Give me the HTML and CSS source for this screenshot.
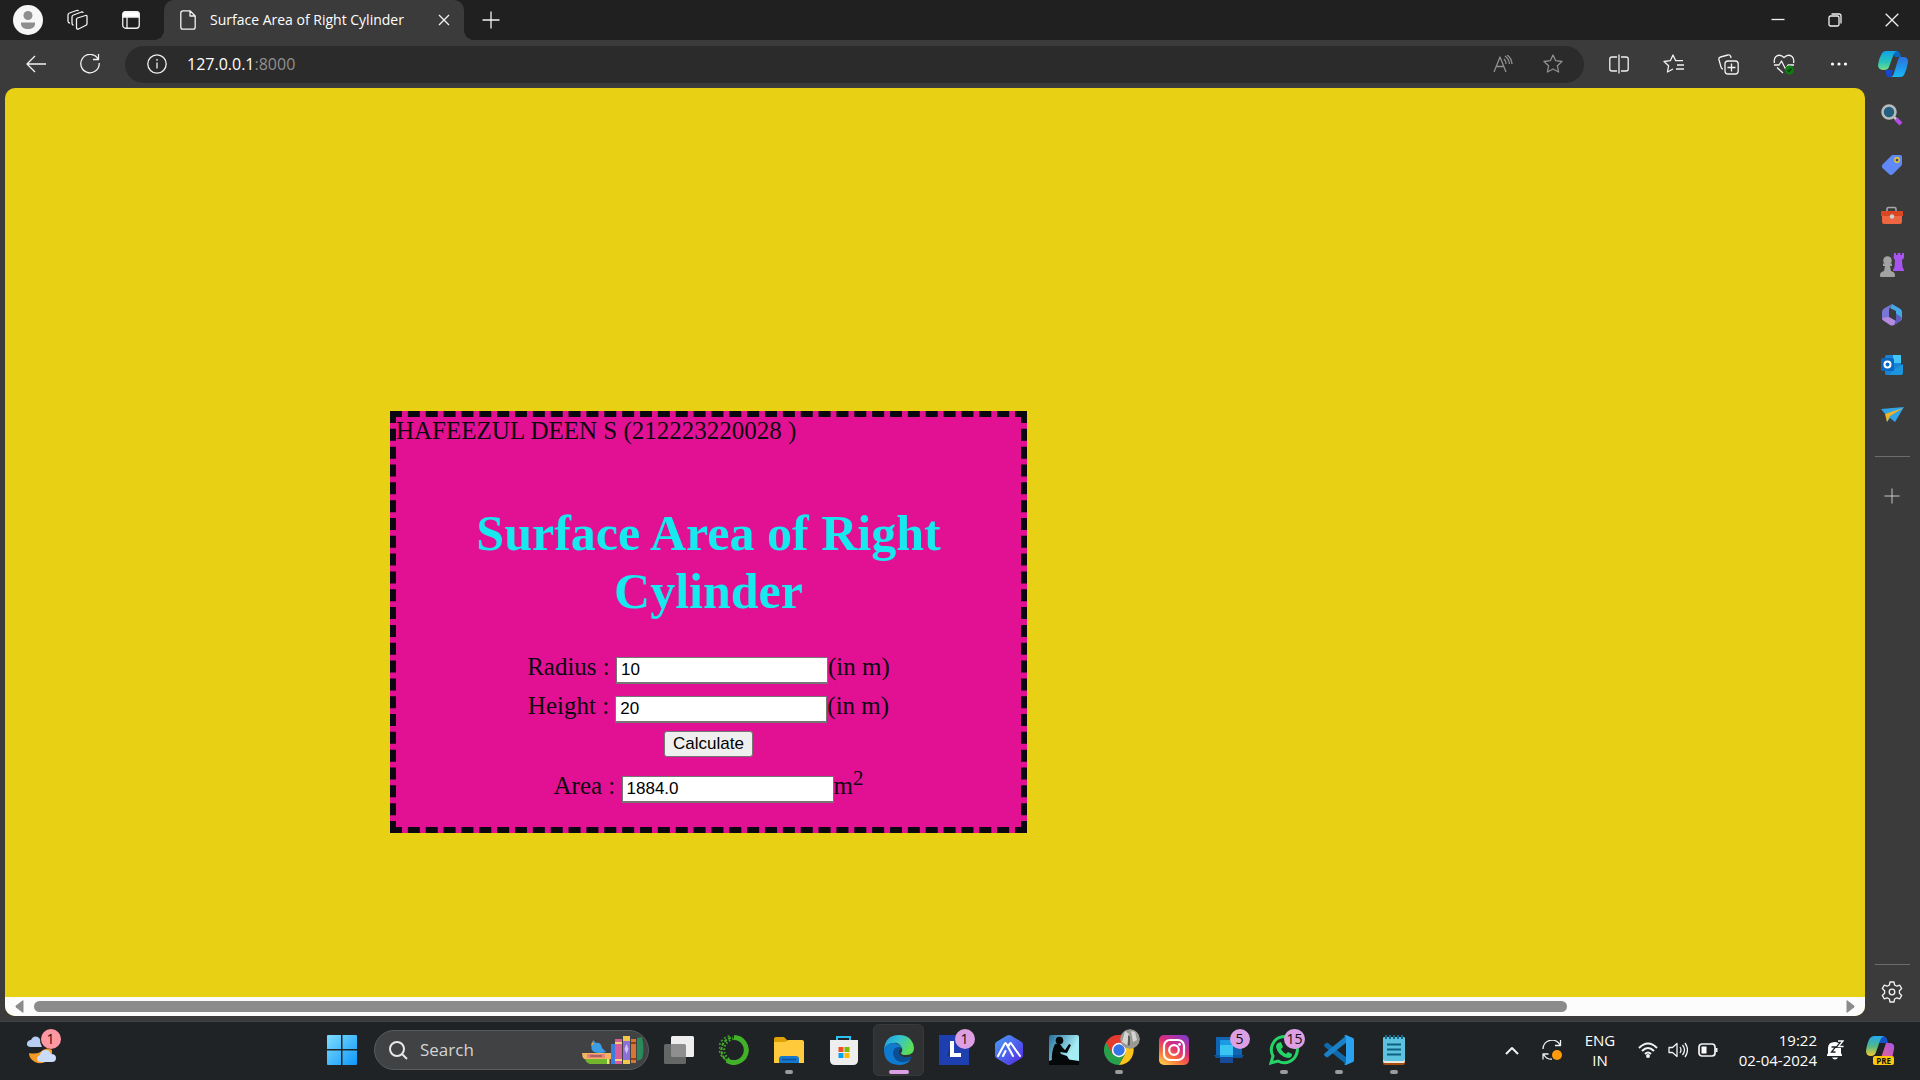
FILE: index.html
```html
<!DOCTYPE html>
<html lang="en">
<head>
<meta charset="utf-8">
<title>Surface Area of Right Cylinder</title>
<link rel="stylesheet" href="styles.css">
</head>
<body>
<header class="titlebar">
  <button class="cell cell-profile" aria-label="Profile"><svg width="30" height="30" viewBox="0 0 30 30"><circle cx="15" cy="15" r="15" fill="#f7f7f7"/><circle cx="15" cy="10.500" r="4.500" fill="#8e8e8e"/><path d="M8 17.500h14v1.500c0 3-3 5-7 5s-7-2-7-5z" fill="#8e8e8e"/></svg></button>
  <button class="cell cell-spaces" aria-label="Workspaces"><svg class="line" width="22" height="22" viewBox="0 0 22 22"><path d="M10.500 9l8-2.500q1.500-.5 1.500 1v7q0 1.500-1.500 2l-7 3.500q-2 .5-2-1.500v-8q0-1.200 1-1.500z"/><path d="M6.500 16q-1.500 0-1.500-2V8q0-1.500 1.500-2l8-3q1.500-.3 1.500 1"/><path d="M3 14q-2 0-2-2V6q0-1.500 1.500-2l7-2.500q1.500-.5 2 .5"/></svg></button>
  <button class="cell cell-tabs" aria-label="Tab actions"><svg class="line" width="18" height="18" viewBox="0 0 18 18"><rect x=".75" y=".75" width="16.500" height="16.500" rx="3"/><path d="M1 3q0-2 2-2h12q2 0 2 2v3H1z" fill="#fff"/><path d="M5 6v11"/></svg></button>
  <div class="tab">
    <svg class="line" width="16" height="20" viewBox="0 0 16 20"><path d="M3 .8h7l5.200 5.200v11q0 2.200-2.200 2.200H3Q.8 19.200.8 17V3Q.8.8 3 .8zM10 1v5h5"/></svg>
    <span class="tab-title">Surface Area of Right Cylinder</span>
    <button class="tab-close" aria-label="Close tab"><svg class="line" width="12" height="12" viewBox="0 0 12 12"><path d="M1 1l10 10M11 1L1 11"/></svg></button>
  </div>
  <button class="cell cell-new" aria-label="New tab"><svg class="line" width="18" height="18" viewBox="0 0 18 18"><path d="M9 .5v17M.5 9h17"/></svg></button>
  <div class="window-buttons">
    <button class="cell" aria-label="Minimize"><svg class="line" width="14" height="14" viewBox="0 0 14 14"><path d="M.5 6.500h13"/></svg></button>
    <button class="cell" aria-label="Restore"><svg class="line" width="14" height="14" viewBox="0 0 14 14"><rect x="1" y="3" width="10" height="10" rx="1.500"/><path d="M3.500 1H11q2 0 2 2v7.500"/></svg></button>
    <button class="cell" aria-label="Close"><svg class="line" width="14" height="14" viewBox="0 0 14 14"><path d="M.7.7l12.600 12.600M13.300.7L.7 13.300"/></svg></button>
  </div>
</header>
<nav class="toolbar" aria-label="Browser toolbar">
  <div class="nav-buttons">
    <button class="cell" aria-label="Back"><svg class="line" width="20" height="18" viewBox="0 0 20 18"><path d="M20 9H1M9 1L1 9l8 8"/></svg></button>
    <button class="cell" aria-label="Refresh"><svg class="line" width="20" height="20" viewBox="0 0 20 20"><path d="M18 5A9.200 9.200 0 1 0 19.200 9M18.500 0v5.500H13"/></svg></button>
  </div>
  <div class="address">
    <svg class="line" width="20" height="20" viewBox="0 0 20 20"><circle cx="10" cy="10" r="9.200"/><path d="M10 8.500v6M10 5v1.800"/></svg>
    <span class="url">127.0.0.1<span class="port">:8000</span></span>
    <button class="cell dim" aria-label="Read aloud"><svg class="line" width="20" height="18" viewBox="0 0 20 18"><path d="M1 17L7 2l6 15M3 11.500h8M11 4q2 2 2 5M12 1q4 3 4.500 8M14 0q4.500 3 5 9"/></svg></button>
    <button class="cell dim" aria-label="Add to favorites"><svg class="line" width="20" height="20" viewBox="0 0 20 20"><path d="M10 1l2.700 5.700 6.300.8-4.600 4.300L15.600 18 10 15l-5.600 3 1.200-6.200L1 7.500l6.300-.8z"/></svg></button>
  </div>
  <div class="nav-buttons">
    <button class="cell" aria-label="Split screen"><svg class="line" width="20" height="20" viewBox="0 0 20 20"><path d="M8 3H3Q.8 3 .8 5v10q0 2 2.200 2h5M12 3h5q2.200 0 2.200 2v10q0 2-2.200 2h-5M10 .5v19"/></svg></button>
    <button class="cell" aria-label="Favorites"><svg class="line" width="21" height="20" viewBox="0 0 21 20"><path d="M10 15l-5.600 3 1.200-6.200L1 7.500l6.300-.8L10 1l2.700 5.700H20M14 11h7M13 15h8"/></svg></button>
    <button class="cell" aria-label="Collections"><svg class="line" width="21" height="21" viewBox="0 0 21 21"><rect x="7" y="7" width="13.200" height="13" rx="3"/><path d="M13.500 9.500v8M9.500 13.500h8M5 15Q3.500 15 3 13L.9 5.500Q.5 3.500 2.500 3l7.500-2q2-.6 2.700 1.500L13 4"/></svg></button>
    <button class="cell" aria-label="Browser essentials"><svg class="line" width="22" height="21" viewBox="0 0 22 21"><path d="M1.500 9Q.5 5 3 2.500 7-.5 11 3.500q4-4 8-1Q21.500 5 20.500 9M1 11h5l2.500-4 4 8 2.500-4h6M4 13.500l6 5.500"/><circle cx="16.500" cy="16" r="4.500" fill="#107c10" stroke="none"/><path d="M14.500 16l1.500 1.500 2.500-3" stroke="#073f07"/></svg></button>
    <button class="cell" aria-label="Settings and more"><svg width="18" height="4" viewBox="0 0 18 4" fill="#fff"><circle cx="2.500" cy="2" r="1.600"/><circle cx="9" cy="2" r="1.600"/><circle cx="15.500" cy="2" r="1.600"/></svg></button>
    <button class="cell" aria-label="Copilot"><svg width="30" height="28" viewBox="0 0 30 28"><defs><linearGradient id="ca" x1="0" y1="0" x2="0" y2="1"><stop offset="0" stop-color="#12a2e8"/><stop offset=".6" stop-color="#2ac4b6"/><stop offset="1" stop-color="#76df8b"/></linearGradient><linearGradient id="cb" x1="0" y1="0" x2="0" y2="1"><stop offset="0" stop-color="#2d6fdf"/><stop offset="1" stop-color="#16b8f7"/></linearGradient></defs><path d="M14 1h5q3 0 4 6h-6z" fill="#086ac0"/><path d="M7 20h8l-2 7q-4 1-5-3z" fill="#1746d0"/><path d="M8 1h11q-3 1-4 5l-4 11q-1 3-5 3-6 0-6-5Q1 8 4 3q1.500-2 4-2z" fill="url(#ca)"/><path d="M22 7h4q4 0 4 5-1 7-4 13-1 2-4 2H12q3 0 4-4l4-13q1-3 2-3z" fill="url(#cb)"/></svg></button>
  </div>
</nav>
<div class="workspace">
  <main class="viewport">
    <div class="page">
      <section class="card">
        <div class="author">HAFEEZUL DEEN S (212223220028 )</div>
        <h1>Surface Area of Right Cylinder</h1>
        <form>
          <div class="row"><label for="radius">Radius :</label> <input id="radius" type="text" value="10">(in m)</div>
          <div class="row"><label for="height">Height :</label> <input id="height" type="text" value="20">(in m)</div>
          <div class="row action"><button type="button" class="calculate">Calculate</button></div>
          <div class="row"><label for="area">Area :</label> <input id="area" type="text" value="1884.0">m<sup>2</sup></div>
        </form>
      </section>
    </div>
    <div class="scrollbar">
      <svg width="9" height="13" viewBox="0 0 9 13"><path d="M8.500 1v11q0 1-1 .5L1 7.500q-1-1 0-2L7.500.5q1-.5 1 .5z" fill="#8b8b8b"/></svg>
      <div class="track"><div class="thumb"></div></div>
      <svg width="9" height="13" viewBox="0 0 9 13"><path d="M.5 1v11q0 1 1 .5L8 7.500q1-1 0-2L1.500.5q-1-.5-1 .5z" fill="#8b8b8b"/></svg>
    </div>
  </main>
  <aside class="sidebar" aria-label="Sidebar">
    <button class="side" aria-label="Search"><svg width="22" height="22" viewBox="0 0 22 22"><path d="M12 12l4 4" stroke="#c8c8c8" stroke-width="2.500"/><path d="M15 15l5 5" stroke="#b44ae8" stroke-width="4"/><circle cx="8" cy="8" r="6.500" fill="#245f80" stroke="#b9bcbe" stroke-width="2.500"/></svg></button>
    <button class="side" aria-label="Shopping"><svg width="22" height="22" viewBox="0 0 22 22"><path d="M12 1h7q2 0 2 2v7q0 1-1 2l-8 8q-2 2-4 0L1.500 14q-1.500-2 0-3.500L10 2q1-1 2-1z" fill="#6088f6"/><circle cx="16" cy="6" r="2.200" fill="#394b72" stroke="#f5ca2e" stroke-width="1.400"/></svg></button>
    <button class="side" aria-label="Tools"><svg width="24" height="18" viewBox="0 0 24 18"><path d="M7 5V3q0-1.500 1.500-1.500h6Q16 1.500 16 3v2" fill="none" stroke="#a3a8ab" stroke-width="1.600"/><path d="M2 10h20v6q0 2-2 2H4q-2 0-2-2z" fill="#ee6542"/><path d="M2 5h20q1 0 1 1v4H1V6q0-1 1-1z" fill="#d94622"/><circle cx="12" cy="10.500" r="2.200" fill="#cbd0d3"/></svg></button>
    <button class="side" aria-label="Games"><svg width="24" height="24" viewBox="0 0 24 24"><path d="M14 0h2v2h1.500V0h3v2H22V0h2v5l-2 2 .5 7 1.500 3v1H13v-1l1.500-3 .5-7-1.500-2z" fill="#a855f0"/><g fill="#a2a2a2"><circle cx="7.500" cy="7.500" r="4.300"/><path d="M3 10.500h9v2.500h-2l1 5q4 1 4 4v1q0 1-1 1H1q-1 0-1-1v-1q0-3 4-4l1-5H3z"/></g></svg></button>
    <button class="side" aria-label="Microsoft 365"><svg width="22" height="22" viewBox="0 0 22 22"><path d="M11 0l8.500 5q1.500 1 1.500 3v6l-6-4V7L9 4z" fill="#43a8e8"/><path d="M11 0L3 4.500Q1 5.500 1 8v7l3 2 4-2V6q0-2 3-6z" fill="#7877d6"/><path d="M1 14l7-1 7 4 6-4q0 3-2 4l-6 4q-2 1-4 0l-6-4q-2-1-2-3z" fill="#b58be0"/><path d="M15 10l6 4q-3 5-8 7l2-5z" fill="#5a5dbf"/></svg></button>
    <button class="side" aria-label="Outlook"><svg width="22" height="20" viewBox="0 0 22 20"><rect x="4" width="16" height="20" rx="1.500" fill="#1b83d5"/><path d="M12 0h8v8h-8z" fill="#43c5f5"/><path d="M14 14l8-5v9q0 2-2 2H8z" fill="#1d95dc"/><rect y="3" width="13" height="13" rx="1.500" fill="#0968bf"/><circle cx="6.500" cy="9.500" r="3" fill="none" stroke="#fff" stroke-width="2"/></svg></button>
    <button class="side" aria-label="Drop"><svg width="23" height="16" viewBox="0 0 23 16"><path d="M0 2L23 0 14 15 9 11l-3 4-1-7z" fill="#2fa4e8"/><path d="M22 1L4 7l2 8 3-6z" fill="#f2b324"/></svg></button>
    <hr>
    <button class="side" aria-label="Customize"><svg width="16" height="16" viewBox="0 0 16 16"><path d="M8 .5v15M.5 8h15" stroke="#c9c9c9" fill="none"/></svg></button>
    <hr class="push">
    <button class="side side-settings" aria-label="Settings"><svg class="line" width="22" height="22" viewBox="0 0 22 22"><circle cx="11" cy="11" r="2.800"/><path d="M9 1h4l.6 3 2.200 1.200 3-1 1.900 3.400-2.300 2.100v2.600l2.300 2.100-1.900 3.400-3-1-2.200 1.200-.6 3H9l-.6-3-2.200-1.200-3 1-1.900-3.400 2.300-2.100V9.700L1.300 7.600l1.900-3.400 3 1L8.400 4z"/></svg></button>
  </aside>
</div>
<footer class="taskbar">
  <div class="widgets"><button class="app" aria-label="Weather"><span class="glyph"><svg width="30" height="30" viewBox="0 0 30 30"><path d="M2 18q9 2 14-3 5-3 9 0 1 8-5 11-6 4-12 1-6-3-6-9z" fill="#f29a23"/><path d="M3 12q-4-1-3-4 1-3 4-3 2-5 7-3 3 2 2 5l2 5z" fill="#b7cdf2"/><path d="M14 27q-4 0-4-3t3-4q1-5 6-5 4 0 5 4 5 0 5 4t-4 4z" fill="#cbdcfa"/></svg><span class="badge alert">1</span></span></button></div>
  <div class="apps">
    <button class="app" aria-label="Start"><svg width="30" height="30" viewBox="0 0 30 30"><defs><linearGradient id="wi" x1="0" y1="0" x2="1" y2="1"><stop offset="0" stop-color="#7fdcff"/><stop offset="1" stop-color="#0d98f9"/></linearGradient></defs><path d="M0 1Q0 0 1 0h13v14H0zM15.500 0H29q1 0 1 1v13H15.500zM0 15.500h14V30H1q-1 0-1-1zM15.500 15.500H30V29q0 1-1 1H15.500z" fill="url(#wi)"/></svg></button>
    <label class="search">
      <svg width="19" height="19" viewBox="0 0 19 19" fill="none" stroke="#e8e8e8" stroke-width="2"><circle cx="8" cy="8" r="7"/><path d="M13 13l5 5"/></svg>
      <input type="text" placeholder="Search" aria-label="Search">
      <svg width="62" height="28" viewBox="0 0 62 28"><path d="M0 17h29v6H2q-2-2-2-6z" fill="#f3b45d"/><path d="M5 18h18v4H5z" fill="#e8837d"/><path d="M8 19h12v2H8z" fill="#a9655f"/><path d="M3 23h25v5H8q-4-1-5-5z" fill="#73b62e"/><path d="M25 23h2v5h-2z" fill="#f3e27a"/><path d="M11 4l3 3q5-1 6 5l4 4q-7 2-12 0-4-3-2-8z" fill="#3d9ee8"/><path d="M10 6l-1 4 3-2z" fill="#f2a33a"/><path d="M29 8h4v20h-4z" fill="#397de0"/><path d="M33 3h7v25h-7z" fill="#d55d9b"/><path d="M33 6h7v2h-7zM33 23h7v2h-7z" fill="#f5cf77"/><path d="M41 0h7v28h-7z" fill="#8e6fd6"/><path d="M41 0h7v5h-7zM41 24h7v4h-7z" fill="#f1c84e"/><path d="M44.500 8l2 5-2 5-2-5z" fill="#cfc1f4"/><path d="M49 3h5v24h-5z" fill="#d77538"/><path d="M49 6h5v2h-5zM49 22h5v2h-5z" fill="#8f3f1a"/><path d="M55 2l5-1q3 12 0 22l-5 2z" fill="#298a5a"/></svg>
    </label>
    <button class="app" aria-label="Task view"><svg width="30" height="28" viewBox="0 0 30 28"><rect x="7" width="23" height="21" rx="1.500" fill="#eee"/><rect y="8" width="22" height="20" rx="1.500" fill="#777" opacity=".8"/></svg></button>
    <button class="app" aria-label="Anaconda"><svg width="30" height="30" viewBox="0 0 30 30" fill="none" stroke="#43b02a"><path d="M15 2.500a12.500 12.500 0 1 1-7 23" stroke-width="5"/><path d="M9 26A12.500 12.500 0 0 1 14 2.500" stroke-width="2" stroke-dasharray="3 1.500"/><path d="M6 24A12.500 12.500 0 0 1 11 1" stroke-width="1.500" stroke-dasharray="2 2"/><path d="M10 24A11 11 0 0 1 15 4" stroke-width="2" stroke-dasharray="1.500 2"/></svg></button>
    <button class="app running" aria-label="File Explorer"><svg width="30" height="26" viewBox="0 0 30 26"><path d="M0 2q0-2 2-2h8l3 3v5H0z" fill="#e0a106"/><path d="M0 5h11l3-2h14q2 0 2 2v21H0z" fill="#ffcb3d"/><path d="M5 26v-4q0-3 3-3h14q3 0 3 3v4z" fill="#1478cd"/><path d="M8 22.500h14" stroke="#08509a" stroke-width="1.500"/></svg></button>
    <button class="app" aria-label="Microsoft Store"><svg width="30" height="30" viewBox="0 0 30 30"><path d="M8 6V2h13v4" fill="none" stroke="#2cc0f1" stroke-width="2"/><path d="M1 5h28v20q0 5-5 5H6q-5 0-5-5z" fill="#eee"/><path d="M9.500 12h5v5h-5z" fill="#f25022"/><path d="M15.500 12h5v5h-5z" fill="#7fba00"/><path d="M9.500 18h5v5h-5z" fill="#00a4ef"/><path d="M15.500 18h5v5h-5z" fill="#ffb900"/></svg></button>
    <button class="app active" aria-label="Microsoft Edge"><svg width="30" height="30" viewBox="0 0 30 30"><defs><linearGradient id="ed" x1="0" y1="0" x2="1" y2=".4"><stop offset="0" stop-color="#1e9be2"/><stop offset=".5" stop-color="#33c2cf"/><stop offset="1" stop-color="#5dde59"/></linearGradient></defs><path d="M0 15Q1 0 15 0q8 0 12 5 3 4 3 8 0 7-8 7-5 0-5-2 2-2 1-5-3-6-9-5-7 1-9 7z" fill="url(#ed)"/><path d="M0 15q2-7 9-7 6 0 9 5-6-2-8 3-1 5 3 9 5 4 14-1-4 6-12 6Q0 29 0 15z" fill="#0f7bd0"/><path d="M11 13q4-2 7 1-4 0-3 4 2 5 9 4 4-1 4 0-4 6-11 5-8-2-8-9 0-3 2-5z" fill="#0c4f94"/></svg></button>
    <button class="app" aria-label="L app"><span class="glyph"><svg width="30" height="30" viewBox="0 0 30 30"><path d="M0 0h30v30H0z" fill="#1e3fb0"/><path d="M8 22l4-15v12z" fill="#173182"/><path d="M11 6h4v12h7v4H11z" fill="#fff"/></svg><span class="badge">1</span></span></button>
    <button class="app" aria-label="Hexagon app"><svg width="28" height="30" viewBox="0 0 28 30"><defs><linearGradient id="hx" x1="0" y1="0" x2="1" y2="1"><stop offset="0" stop-color="#48a0f4"/><stop offset="1" stop-color="#5427e4"/></linearGradient></defs><path d="M12 .5q2-1 4 0l10 6q2 1 2 3v11q0 2-2 3l-10 6q-2 1-4 0l-10-6q-2-1-2-3v-11q0-2 2-3z" fill="url(#hx)"/><path d="M3 21L9.500 9q1-2 2 0L18 21M13 12l1.500-3q1-2 2 0L25 21M8 21l2.500-5" fill="none" stroke="#fff" stroke-width="2" stroke-linecap="round" stroke-linejoin="round"/></svg></button>
    <button class="app" aria-label="Kindle"><svg width="30" height="30" viewBox="0 0 30 30"><defs><linearGradient id="ki" x1="0" y1="0" x2="1" y2=".6"><stop offset="0" stop-color="#276e9d"/><stop offset=".8" stop-color="#a4edf4"/></linearGradient></defs><rect width="30" height="30" rx="2" fill="url(#ki)"/><g fill="#050809"><circle cx="10.500" cy="5.500" r="3.800"/><path d="M6 9q5-2 7 3l3 3 4-6 2 1-4 8-7-1 1 2 6 2 3 5H3q-1-9 3-17z"/><path d="M0 26q6-3 15-2t15 2v4H0z"/></g></svg></button>
    <button class="app running" aria-label="Chrome"><span class="glyph"><svg width="30" height="30" viewBox="0 0 30 30"><path d="M15 15L2 7.500A15 15 0 0 1 28 7.500z" fill="#e33b2e"/><path d="M15 15L2 7.500A15 15 0 0 0 15 30l6.500-11.500z" fill="#28a04b"/><path d="M15 30l6.500-11.500L22 8h6A15 15 0 0 1 15 30z" fill="#fcc31e"/><path d="M2 7.500L8.500 19l5-2L15 8h13A15 15 0 0 0 2 7.500z" fill="#e33b2e"/><circle cx="15" cy="15" r="7.200" fill="#fff"/><circle cx="15" cy="15" r="5.700" fill="#3476e8"/></svg><svg class="badge photo" width="20" height="20" viewBox="0 0 20 20"><circle cx="10" cy="10" r="10" fill="#9a9892"/><path d="M5 2l4 3-2 11-5-3zM11 2l4 1 2 8-4 2z" fill="#d4d5d3"/><path d="M8 6l2 2v8l-2 1z" fill="#5b5b58"/></svg></span></button>
    <button class="app" aria-label="Instagram"><svg width="30" height="30" viewBox="0 0 30 30"><defs><linearGradient id="ig" x1=".2" y1="1" x2=".8" y2="0"><stop offset="0" stop-color="#fdc748"/><stop offset=".3" stop-color="#f7693c"/><stop offset=".6" stop-color="#da2d7c"/><stop offset="1" stop-color="#8a3ac8"/></linearGradient></defs><rect width="30" height="30" rx="5" fill="url(#ig)"/><g fill="none" stroke="#fff" stroke-width="2.200"><rect x="5" y="5" width="20" height="20" rx="6"/><circle cx="15" cy="15" r="4.800"/></g><circle cx="20.500" cy="9.500" r="1.400" fill="#fff"/></svg></button>
    <button class="app" aria-label="Phone Link"><span class="glyph"><svg width="30" height="30" viewBox="0 0 30 30"><path d="M2 2h26v18H2z" fill="#1164b4"/><path d="M0 20h30l-2 3H2z" fill="#0d559d"/><rect x="6" y="5" width="13" height="23" rx="1" fill="#1c9be5"/><path d="M6 10h13v10H6z" fill="#39c4f2"/><path d="M6 22h13v6H6z" fill="#174a98"/></svg><span class="badge">5</span></span></button>
    <button class="app running" aria-label="WhatsApp"><span class="glyph"><svg width="30" height="30" viewBox="0 0 30 30"><path d="M2 28l2-7A13 13 0 1 1 9 26z" fill="none" stroke="#25d366" stroke-width="3"/><path d="M9 8l3-1 2 5-2 2q2 4 5 5l2-2 4 2q0 4-4 4-10-2-12-11 0-3 2-4z" fill="#25d366"/></svg><span class="badge">15</span></span></button>
    <button class="app running" aria-label="Visual Studio Code"><svg width="30" height="30" viewBox="0 0 30 30"><path d="M0 10l2-2q1-.5 2 0l19 15v7L1 12q-1-1-1-2z" fill="#0f69ad"/><path d="M0 20l2 2q1 .5 2 0L23 7V0L1 18q-1 1-1 2z" fill="#1a81c9"/><path d="M22 0l7 3q1 .5 1 2v20q0 1.500-1 2l-7 3q-1 0-2-1 2 0 2-2V3q0-2-2-2 1-1 2-1z" fill="#2ba2f0"/></svg></button>
    <button class="app running" aria-label="Notepad"><svg width="22" height="30" viewBox="0 0 22 30"><rect y="3" width="22" height="27" rx="2" fill="#a84f0e"/><rect y="2" width="22" height="26" rx="2" fill="#e9e7e2"/><rect y="2" width="22" height="24" rx="2" fill="#5dc2de"/><path d="M3 0v4M7 0v4M11 0v4M15 0v4M19 0v4" stroke="#14688a" stroke-width="2"/><path d="M4 9.500h14M4 14.500h14M4 19.500h14" stroke="#0d6180" stroke-width="2"/></svg></button>
  </div>
  <div class="tray">
    <button class="cell" aria-label="Hidden icons"><svg class="line thick" width="14" height="9" viewBox="0 0 14 9"><path d="M1 8l6-6 6 6"/></svg></button>
    <button class="cell" aria-label="Update"><svg class="line" width="20" height="20" viewBox="0 0 20 20"><path d="M1 9A9 9 0 0 1 18 5M18.500 0v5.500H13M10 19.200A9 9 0 0 1 2 15M1 19.500V14h5.500"/><circle cx="15" cy="15" r="5" fill="#ff9b0b" stroke="none"/></svg></button>
    <div class="language">ENG<br>IN</div>
    <button class="status" aria-label="Network, volume and battery">
      <svg class="line thick" width="20" height="16" viewBox="0 0 20 16"><path d="M1 6q9-9 18 0M4 9q6-6 12 0M7 12q3-3 6 0"/><circle cx="10" cy="14" r="1" fill="#fff"/></svg>
      <svg class="line" width="20" height="16" viewBox="0 0 20 16"><path d="M1 5.500h3.500L9 1.500v13l-4.500-4H1zM12 5q2 3 0 6M14.500 3q4 5 0 10M17 1q5 7 0 14"/></svg>
      <svg class="line" width="20" height="14" viewBox="0 0 20 14"><rect x="1" y="1" width="16" height="12" rx="3" stroke-width="1.700"/><path d="M18.500 5v4" stroke-width="2"/><rect x="3.500" y="3.500" width="5" height="7" fill="#fff" stroke="none"/></svg>
    </button>
    <div class="clock">19:22<br>02-04-2024</div>
    <button class="bell" aria-label="Notifications"><svg width="18" height="20" viewBox="0 0 18 20"><path d="M2 8q0-6 7-6 6 0 6 6v5l1 2v1H1v-1l1-2zM6 17.500h6q-1 2-3 2t-3-2z" fill="#fff"/><path d="M5.500 7h4l-4 5h4" fill="none" stroke="#202325" stroke-width="1.300"/><path d="M11.500 1h5l-4.500 5.500h5" fill="none" stroke="#202325" stroke-width="3"/><path d="M12 1h5l-4.500 5.500h5" fill="none" stroke="#fff" stroke-width="1.300"/></svg></button>
    <button class="cell preview" aria-label="Copilot preview"><svg width="29" height="28" viewBox="0 0 29 28"><defs><linearGradient id="pa" x1="0" y1="0" x2="0" y2="1"><stop offset="0" stop-color="#25a9ed"/><stop offset=".5" stop-color="#4fb78a"/><stop offset="1" stop-color="#f5cb2e"/></linearGradient><linearGradient id="pb" x1="1" y1="0" x2="0" y2="1"><stop offset="0" stop-color="#a956e8"/><stop offset="1" stop-color="#f1667c"/></linearGradient></defs><path d="M12 0h5q4 0 5 7h-8z" fill="#1552c7"/><path d="M8 0h10q-3 1-4 5l-4 11q-1 4-5 4-5 0-5-5Q1 7 4 2q2-2 4-2z" fill="url(#pa)"/><path d="M20 7h4q5 0 4 6-1 6-3 12H12q3-2 4-6z" fill="url(#pb)"/></svg><span class="pre">PRE</span></button>
  </div>
</footer>
</body>
</html>
```
FILE: styles.css
```css
* { box-sizing: border-box; }

body {
  margin: 0;
  min-height: 100vh;
  display: flex;
  flex-direction: column;
  background: #3b3b3b;
  color: #fff;
  font-family: "Open Sans", "Noto Sans", sans-serif;
}

svg { display: block; flex: none; }

.line { fill: none; stroke: #f2f2f2; stroke-width: 1.3; stroke-linejoin: round; }
.thick { stroke-width: 2; }

.cell, .side, .app, .tab-close, .status, .bell {
  display: flex;
  align-items: center;
  justify-content: center;
  flex: none;
  padding: 0;
  border: 0;
  background: none;
  color: inherit;
  font: inherit;
}

/* Title bar and tab */
.titlebar { display: flex; height: 40px; background: #202020; }
.cell-profile { width: 56px; }
.cell-spaces { width: 44px; }
.cell-tabs { width: 62px; }
.cell-new { width: 54px; }

.tab {
  position: relative;
  display: flex;
  align-items: center;
  width: 300px;
  margin-left: 2px;
  padding: 0 14px 0 16px;
  border-radius: 10px 10px 0 0;
  background: #3b3b3b;
}
.tab::before, .tab::after {
  content: "";
  position: absolute;
  bottom: 0;
  width: 10px;
  height: 10px;
}
.tab::before { right: 100%; background: radial-gradient(circle at 0 0, #202020 10px, #3b3b3b 10px); }
.tab::after { left: 100%; background: radial-gradient(circle at 100% 0, #202020 10px, #3b3b3b 10px); }
.tab-title { margin-left: 14px; flex: 1; font-size: 14px; line-height: 20px; white-space: nowrap; }
.window-buttons { display: flex; margin-left: auto; }
.window-buttons .cell { width: 57px; }

/* Toolbar */
.toolbar { display: flex; align-items: center; height: 48px; padding-left: 8px; }
.nav-buttons { display: flex; }
.nav-buttons .cell { width: 55px; }
.nav-buttons .cell:last-child { width: 54px; }
.address {
  flex: 1;
  display: flex;
  align-items: center;
  height: 37px;
  margin: 0 7px 0 8px;
  padding: 0 6px 0 22px;
  border-radius: 19px;
  background: #2b2b2b;
}
.url { flex: 1; margin-left: 20px; font-size: 16px; line-height: 22px; }
.port { color: #909090; }
.address .cell { width: 50px; }
.dim .line { stroke: #909090; }

/* Page area */
.workspace { flex: 1; display: flex; padding: 0 0 5px 5px; }
.viewport {
  flex: 1;
  display: flex;
  flex-direction: column;
  overflow: hidden;
  border-radius: 10px;
  background: #e8d014;
}
.page {
  flex: 1;
  padding: 323px 10px 10px 385px;
  color: #0c0810;
  font-family: "Liberation Serif", "Times New Roman", serif;
  font-size: 25px;
  line-height: 29px;
}
.card {
  width: 637px;
  padding-bottom: 21px;
  border: 6px dashed #0b0610;
  background: #e21194;
}
.author { line-height: 27px; }
.card h1 {
  margin: 60px 0 28px;
  color: #17e9ee;
  font-size: 50px;
  line-height: 58px;
  text-align: center;
}
.row { padding: 4px 0 3px; text-align: center; }
.action { padding: 0 0 5px; }
.row input, .calculate {
  font-family: "Liberation Sans", Arial, sans-serif;
  font-size: 17px;
  line-height: 20px;
  color: #000;
}
.row input {
  width: 212px;
  height: 27px;
  padding: 1px 4px;
  border: 1px solid #767676;
  border-bottom-width: 2px;
  border-radius: 0;
  background: #fff;
}
.calculate {
  width: 89px;
  height: 26px;
  padding: 0;
  border: 1px solid #767676;
  border-radius: 3px;
  background: #efefef;
}
.row sup { font-size: 21px; line-height: 24px; }

.scrollbar {
  display: flex;
  align-items: center;
  height: 19px;
  padding: 0 10px;
  background: #fcfcfc;
}
.track { flex: 1; margin: 0 8px 0 10px; }
.thumb { width: 85%; height: 11px; border-radius: 6px; background: #8b8b8b; }

/* Sidebar */
.sidebar { display: flex; flex-direction: column; align-items: center; width: 55px; padding: 2px 1px 0 0; }
.side { width: 54px; height: 50px; }
.sidebar hr { width: 35px; height: 1px; margin: 16px 0 14px; border: 0; background: #6c6c6c; }
.sidebar .push { margin: auto 0 3px; }
.side-settings { height: 48px; }

/* Taskbar */
.taskbar { display: flex; height: 59px; padding-bottom: 2px; border-top: 1px solid #3e4143; background: #202325; }
.widgets { width: 314px; padding-left: 14px; display: flex; }
.apps { display: flex; align-items: center; }
.app { position: relative; width: 55px; height: 56px; }
.glyph { position: relative; }
.badge {
  position: absolute;
  top: -6px;
  right: -6px;
  min-width: 20px;
  height: 20px;
  padding: 0 2px;
  border-radius: 10px;
  background: #dc9fe3;
  color: #111;
  font-size: 14px;
  line-height: 20px;
}
.photo { padding: 0; background: none; }
.alert { right: -4px; background: #ff98a3; }
.running::after, .active::after {
  content: "";
  position: absolute;
  bottom: 4px;
  width: 8px;
  height: 4px;
  border-radius: 2px;
  background: #9b9b9b;
}
.active { width: 49px; height: 50px; margin: 0 3px; border-radius: 5px; background: #303133; box-shadow: 0 0 0 1px #38393b; }
.active::after { bottom: 1px; width: 20px; background: #dc9fe3; }
.search {
  display: flex;
  align-items: center;
  width: 275px;
  height: 40px;
  margin: 0 2px 0 5px;
  padding: 0 4px 0 14px;
  border: 1px solid #595b5d;
  border-radius: 20px;
  background: #404244;
}
.search input {
  flex: 1;
  min-width: 0;
  margin-left: 12px;
  padding: 0;
  border: 0;
  background: none;
  color: #fff;
  font-family: inherit;
  font-size: 17px;
  line-height: 24px;
}
.search input::placeholder { color: #d4d4d4; opacity: 1; }

.tray { display: flex; align-items: center; margin-left: auto; padding-right: 15px; font-size: 15px; line-height: 20px; }
.tray .cell { width: 40px; height: 56px; }
.language { width: 56px; text-align: center; }
.status { gap: 10px; height: 56px; padding: 0 10px; }
.clock { width: 89px; margin-right: 8px; text-align: right; white-space: nowrap; }
.bell { width: 20px; height: 56px; margin-right: 10px; }
.tray .preview { position: relative; width: 50px; }
.pre {
  position: absolute;
  bottom: 13px;
  right: 11px;
  padding: 0 3px;
  border-radius: 2px;
  background: #fdc70c;
  color: #111;
  font-size: 8px;
  font-weight: 700;
  line-height: 9px;
}
```
